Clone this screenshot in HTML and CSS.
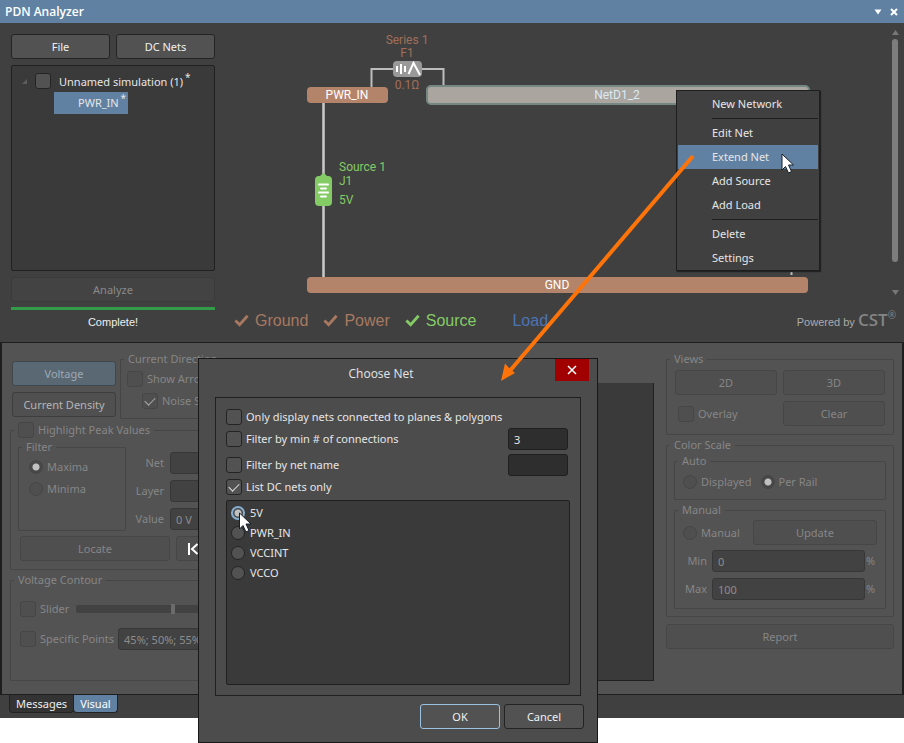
FILE: index.html
```html
<!DOCTYPE html>
<html lang="en">
<head>
<meta charset="utf-8">
<title>PDN Analyzer</title>
<link rel="stylesheet" href="styles.css">
</head>
<body>
<div class="app">
  <header class="titlebar">
    <h1>PDN Analyzer</h1>
    <button class="title-btn" aria-label="Panel menu"><svg width="8" height="6" viewBox="0 0 8 6"><path d="M0.5 0.5h7L4 5.5z" fill="#fff"/></svg></button>
    <button class="title-btn" aria-label="Close panel"><svg width="8" height="8" viewBox="0 0 8 8"><path d="M1 1l6 6M7 1L1 7" stroke="#fff" stroke-width="2"/></svg></button>
  </header>

  <section class="upper">
    <div class="sim">
      <div class="pair">
        <button class="btn">File</button>
        <button class="btn">DC Nets</button>
      </div>
      <div class="tree">
        <div class="tree-root">
          <svg width="6" height="6" viewBox="0 0 6 6"><path d="M5 0v5H0z" fill="#5c5c5c"/></svg>
          <label class="check"><input type="checkbox"><span>Unnamed simulation (1) <sup>*</sup></span></label>
        </div>
        <div class="tree-leaf">PWR_IN <sup>*</sup></div>
      </div>
      <button class="btn ghost analyze" disabled>Analyze</button>
      <div class="progress"></div>
      <p class="status">Complete!</p>
    </div>

    <div class="network">
      <div class="canvas-row">
        <svg class="diagram" viewBox="215 23 674 277" preserveAspectRatio="xMinYMin meet">
          <g fill="none" stroke="#bdbdbd" stroke-width="2">
            <path d="M371.500 88V69H443.500V88"/>
            <path d="M323.500 102V278" stroke="#a9a9a9" stroke-width="3"/>
            <path d="M323.500 102V278" stroke="#c8c8c8" stroke-width="1"/>
            <path d="M791.500 272V275"/>
          </g>
          <rect x="393" y="61" width="29" height="16" rx="4" fill="#999"/>
          <path d="M397 66v6M401 64v10M405 66v6" stroke="#fff" stroke-width="2" fill="none"/>
          <path d="M408.500 74L413.500 63L420 75" stroke="#fff" stroke-width="2" fill="none"/>
          <rect x="307" y="87" width="81" height="16" rx="4" fill="#b4846a"/>
          <rect x="427" y="86" width="382" height="18" rx="4" fill="#aaa59f" stroke="#758783" stroke-width="2"/>
          <rect x="307" y="277" width="501" height="16" rx="4" fill="#b4846a"/>
          <path d="M320 176l3.500-3.500 3.500 3.500h1q4 0 4 4v22q0 4-4 4h-9q-4 0-4-4v-22q0-4 4-4z" fill="#84cb66"/>
          <path d="M319 184.500h9M321 188.500h5M319 192.500h9M321 196.500h5" stroke="#fff" stroke-width="2" stroke-linecap="round"/>
          <g class="node-text" text-anchor="middle">
            <text class="copper" x="407" y="44">Series 1</text>
            <text class="copper" x="407" y="57">F1</text>
            <text class="copper" x="407" y="89">0.1Ω</text>
            <text x="347" y="99">PWR_IN</text>
            <text class="selected" x="617" y="99">NetD1_2</text>
            <text x="557" y="289">GND</text>
          </g>
          <g class="node-text green">
            <text x="339" y="171">Source 1</text>
            <text x="339" y="185">J1</text>
            <text x="339" y="204">5V</text>
          </g>
        </svg>
        <div class="scroll">
          <svg width="7" height="5" viewBox="0 0 7 5"><path d="M0 5L3.500 0L7 5z" fill="#777"/></svg>
          <i></i>
          <svg width="7" height="5" viewBox="0 0 7 5"><path d="M0 0L3.500 5L7 0z" fill="#777"/></svg>
        </div>
      </div>
      <div class="legend-row">
        <span class="key copper"><svg class="tick" viewBox="0 0 16 13"><path d="M1.500 6.500L6 11L14.500 1.500"/></svg>Ground</span>
        <span class="key copper"><svg class="tick" viewBox="0 0 16 13"><path d="M1.500 6.500L6 11L14.500 1.500"/></svg>Power</span>
        <span class="key green"><svg class="tick" viewBox="0 0 16 13"><path d="M1.500 6.500L6 11L14.500 1.500"/></svg>Source</span>
        <span class="key blue"><svg class="tick" viewBox="0 0 16 13"></svg>Load</span>
        <span class="powered">Powered by <b>CST<sup>®</sup></b></span>
      </div>
    </div>
  </section>

  <section class="lower">
    <div class="results">
      <div class="mode-row">
        <div class="modes">
          <button class="btn active" disabled>Voltage</button>
          <button class="btn flat">Current Density</button>
        </div>
        <fieldset class="direction">
          <legend>Current Direction</legend>
          <label class="check"><input type="checkbox" disabled>Show Arrows</label>
          <label class="check indent"><input type="checkbox" checked disabled>Noise Suppression</label>
        </fieldset>
      </div>

      <fieldset class="peaks">
        <legend><label class="check"><input type="checkbox" disabled>Highlight Peak Values</label></legend>
        <div class="peak-row">
          <fieldset class="filter">
            <legend>Filter</legend>
            <label class="check"><input type="radio" name="peak" checked disabled>Maxima</label>
            <label class="check"><input type="radio" name="peak" disabled>Minima</label>
          </fieldset>
          <div class="fields">
            <label for="net">Net</label><input id="net" type="text" disabled>
            <label for="layer">Layer</label><input id="layer" type="text" disabled>
            <label for="value">Value</label><input id="value" type="text" value="0 V" disabled>
          </div>
        </div>
        <div class="locate-row">
          <button class="btn ghost locate" disabled>Locate</button>
          <button class="btn ghost first" aria-label="First"><svg width="12" height="12" viewBox="0 0 12 12"><path d="M2 0v12M10.500 1L5 6l5.500 5" fill="none" stroke="#fff" stroke-width="2"/></svg></button>
        </div>
      </fieldset>

      <fieldset class="contour">
        <legend>Voltage Contour</legend>
        <div class="contour-row"><label class="check"><input type="checkbox" disabled>Slider</label><input class="range" type="range" value="43" aria-label="Contour level" disabled></div>
        <div class="contour-row"><label class="check"><input type="checkbox" disabled>Specific Points</label><input class="points" type="text" aria-label="Points" value="45%; 50%; 55%" disabled></div>
      </fieldset>
    </div>

    <div class="plot"></div>

    <aside class="options">
      <fieldset class="views">
        <legend>Views</legend>
        <button class="btn ghost" disabled>2D</button>
        <button class="btn ghost" disabled>3D</button>
        <label class="check"><input type="checkbox" disabled>Overlay</label>
        <button class="btn ghost" disabled>Clear</button>
      </fieldset>
      <fieldset class="scale">
        <legend>Color Scale</legend>
        <fieldset class="auto">
          <legend>Auto</legend>
          <label class="check"><input type="radio" name="scale" disabled>Displayed</label>
          <label class="check"><input type="radio" name="scale" checked disabled>Per Rail</label>
        </fieldset>
        <fieldset class="manual">
          <legend>Manual</legend>
          <div class="manual-top">
            <label class="check"><input type="radio" name="scale" disabled>Manual</label>
            <button class="btn ghost" disabled>Update</button>
          </div>
          <div class="limit"><label for="min">Min</label><input id="min" type="text" value="0" disabled><span>%</span></div>
          <div class="limit"><label for="max">Max</label><input id="max" type="text" value="100" disabled><span>%</span></div>
        </fieldset>
      </fieldset>
      <button class="btn ghost report" disabled>Report</button>
    </aside>
  </section>

  <nav class="tabs">
    <button class="tab">Messages</button>
    <button class="tab current">Visual</button>
  </nav>

  <div class="menu" role="menu">
    <button role="menuitem">New Network</button>
    <hr>
    <button role="menuitem">Edit Net</button>
    <button role="menuitem" class="hover">Extend Net</button>
    <button role="menuitem">Add Source</button>
    <button role="menuitem">Add Load</button>
    <hr>
    <button role="menuitem">Delete</button>
    <button role="menuitem">Settings</button>
  </div>

  <div class="dialog" role="dialog" aria-labelledby="dialog-title">
    <div class="dialog-head">
      <h2 id="dialog-title">Choose Net</h2>
      <button class="close" aria-label="Close"><svg width="10" height="10" viewBox="0 0 10 10"><path d="M1 1l8 8M9 1L1 9" stroke="#fff" stroke-width="1.500"/></svg></button>
    </div>
    <div class="group">
      <label class="check"><input type="checkbox">Only display nets connected to planes &amp; polygons</label>
      <div class="filter-row"><label class="check"><input type="checkbox">Filter by min # of connections</label><input type="text" aria-label="Minimum connections" value="3"></div>
      <div class="filter-row"><label class="check"><input type="checkbox">Filter by net name</label><input type="text" aria-label="Net name"></div>
      <label class="check"><input type="checkbox" checked>List DC nets only</label>
      <div class="nets">
        <label class="check"><input class="focus" type="radio" name="dcnet" checked>5V</label>
        <label class="check"><input type="radio" name="dcnet">PWR_IN</label>
        <label class="check"><input type="radio" name="dcnet">VCCINT</label>
        <label class="check"><input type="radio" name="dcnet">VCCO</label>
      </div>
    </div>
    <div class="actions">
      <button class="btn default">OK</button>
      <button class="btn">Cancel</button>
    </div>
  </div>

  <svg class="overlay" width="820" height="560" viewBox="0 0 820 560">
    <path d="M693 156L508 373" stroke="#ff7409" stroke-width="4"/>
    <path d="M501 381L505 363.500L509 368L515 373z" fill="#ff7409"/>
    <path d="M782 154v16l3.500-3.500 3 6.500 3-1.500-3-6.500h5z" fill="#fff" stroke="#15202b"/>
    <path d="M239.500 513v16l3.500-3.500 3 6.500 3-1.500-3-6.500h5z" fill="#fff" stroke="#15202b"/>
  </svg>
</div>
</body>
</html>
```
FILE: styles.css
```css
* { box-sizing: border-box; }

body {
  min-height: 100vh;
  margin: 0;
  padding-bottom: 24px;
  background: #fff;
  font: 11px/16px "Noto Sans", "Open Sans", sans-serif;
  color: #e6e6e6;
}

button, input { font: inherit; color: inherit; margin: 0; }
svg { display: block; flex: none; }
h1, h2, p { margin: 0; }

.app { position: relative; background: #404040; }

.titlebar {
  display: flex;
  align-items: center;
  gap: 8px;
  height: 23px;
  padding: 0 6px 0 5px;
  background: #6081a2;
}
.titlebar h1 { flex: 1; font: 600 12px/16px "Open Sans", sans-serif; color: #fff; }
.title-btn { padding: 0; border: 0; background: none; }

/* Buttons */
.btn {
  height: 25px;
  padding: 0 8px;
  border: 1px solid #242424;
  border-radius: 3px;
  background: #525252;
  color: #f0f0f0;
}
.btn.ghost { background: #4f4f4f; border-color: #464646; color: #868686; }
.btn.flat { background: #505050; border-color: #3d3d3d; color: #b4b4b4; }
.btn.active { background: #5a6873; border-color: #3f464c; color: #9caab5; }

/* Check boxes and radios */
.check { display: flex; align-items: center; gap: 4px; white-space: nowrap; }
.check input {
  appearance: none;
  flex: none;
  width: 16px;
  height: 16px;
  border: 1px solid #242424;
  border-radius: 3px;
  background: #525252;
}
.check input[type="radio"] { width: 14px; height: 14px; border-radius: 50%; }
.check input[type="checkbox"]:checked { display: grid; place-items: center; }
.check input[type="checkbox"]:checked::after {
  content: "";
  width: 9px;
  height: 5px;
  margin-bottom: 3px;
  border: solid #ddd;
  border-width: 0 0 1px 1px;
  transform: rotate(-45deg);
}
.check input[type="checkbox"]:disabled::after { border-color: #aaa; }
.check input[type="radio"]:checked { background: radial-gradient(circle, #c0c0c0 3px, #484848 4px); }
.check input:disabled { border-color: #464646; background-color: #4f4f4f; }

input[type="text"] {
  height: 22px;
  min-width: 0;
  padding: 0 5px;
  border: 1px solid #1f1f1f;
  border-radius: 3px;
  background: #2e2e2e;
}
input[type="text"]:disabled { border-color: #373737; background: #424242; color: #8d8d8d; }

/* Simulation and network */
.upper { display: flex; height: 319px; }
.sim { width: 215px; padding: 11px 0 0 11px; display: flex; flex-direction: column; }
.pair { display: grid; grid-template-columns: 1fr 1fr; gap: 6px; }
.tree { height: 206px; margin: 6px 0; padding: 5px 0 0 10px; border: 1px solid #202020; border-radius: 2px; background: #3a3a3a; }
.tree sup { margin-left: -1px; line-height: 0; font-size: 10px; }
.tree-root { display: flex; align-items: center; gap: 7px; height: 21px; }
.tree-root .check { gap: 8px; }
.tree-root input { margin-bottom: 2px; }
.tree-leaf { width: 74px; height: 22px; margin-left: 32px; padding-left: 24px; line-height: 22px; white-space: nowrap; background: #6081a2; }
.btn.analyze { background: #434343; border-color: #3b3b3b; color: #8a8a8a; }
.progress { height: 3px; margin-top: 5px; background: #319b47; }
.status { padding-top: 4px; font: 11px/16px "Liberation Sans", sans-serif; text-align: center; color: #f0f0f0; }

.network { flex: 1; min-width: 0; }
.canvas-row { display: flex; }
.diagram { flex: 1; min-width: 0; }
.node-text { font: 12px Roboto, sans-serif; fill: #fff; }
.node-text .copper { fill: #a06f58; }
.node-text .selected { fill: #dceaf4; }
.node-text.green { fill: #84cb66; }
.scroll { width: 15px; padding: 7px 0 5px 3px; display: flex; flex-direction: column; gap: 4px; }
.scroll i { flex: 1; width: 6px; margin-bottom: 24px; border-radius: 3px; background: #7d7d7d; }

.legend-row { display: flex; align-items: center; gap: 15px; height: 41px; padding: 0 8px 0 19px; font: 16px/20px "Liberation Sans", sans-serif; }
.key { display: flex; align-items: center; gap: 6px; }
.tick { width: 15px; height: 13px; fill: none; stroke: currentColor; stroke-width: 3; }
.key.copper { color: #a87860; }
.key.green { color: #84cb66; }
.key.blue { color: #4c74b5; }
.powered { margin-left: auto; font-size: 11px; color: #aaa; }
.powered b { font: 600 17px/20px "Open Sans", sans-serif; color: #858585; }
.powered sup { font-size: 10px; font-weight: 400; line-height: 0; }

/* Results panel */
.lower { display: flex; padding: 8px 8px 13px; border: solid #1e1e1e; border-width: 1px 2px; background: #535353; color: #868686; }
fieldset { --pad: 8px; min-width: 0; margin: 0; padding: 0 var(--pad); border: 1px solid #464646; border-radius: 1px; }
legend { height: 16px; margin-left: calc(3px - var(--pad)); padding: 0 4px; }

.results { width: 300px; }
.mode-row { display: flex; gap: 4px; }
.modes { width: 106px; padding: 10px 0 0 2px; display: grid; gap: 6px; align-content: start; }
.modes .btn { padding: 0; }
.direction { --pad: 6px; flex: 1; padding-top: 3px; padding-bottom: 8px; }
.direction .check { height: 18px; }
.direction .indent { margin: 4px 0 0 15px; }
.peaks { --pad: 7px; margin-top: 3px; padding-top: 1px; padding-bottom: 8px; }
.peak-row { display: flex; gap: 8px; }
.filter { --pad: 10px; width: 108px; padding-top: 1px; padding-bottom: 30px; }
.filter .check { height: 22px; }
.fields { flex: 1; display: grid; grid-template-columns: 30px 1fr; gap: 6px; padding-top: 13px; align-content: start; align-items: center; text-align: right; }
.locate-row { display: flex; gap: 6px; margin: 5px 0 0 2px; }
.locate { width: 150px; }
.first { flex: 1; padding-left: 10px; }
.contour { --pad: 9px; margin-top: 2px; padding-top: 10px; padding-bottom: 30px; display: grid; gap: 8px; }
.contour-row { display: flex; align-items: center; gap: 4px; height: 22px; }
.contour-row .points { flex: 1; }
.range { appearance: none; flex: 1; height: 8px; margin-left: 3px; border-radius: 2px; background: #424242; }
.range::-webkit-slider-thumb { appearance: none; width: 4px; height: 10px; background: #6b6b6b; }

.plot { flex: 1; margin: 32px 12px 0 12px; border: solid #202020; border-width: 0 1px 1px; background: #3a3a3a; }

.options { width: 228px; margin-bottom: 32px; }
.views { display: grid; grid-template-columns: 1fr 1fr; gap: 6px; padding-top: 3px; padding-bottom: 8px; }
.views .check { padding-left: 3px; }
.scale { --pad: 7px; margin-top: 2px; padding-bottom: 7px; }
.auto { display: flex; gap: 9px; padding-top: 2px; padding-bottom: 6px; }
.auto .check { height: 22px; }
.manual { margin-top: 2px; padding-top: 2px; padding-bottom: 8px; }
.manual-top { display: flex; justify-content: space-between; margin-bottom: 5px; }
.manual-top .btn { width: 124px; }
.limit { display: flex; align-items: center; margin-right: -6px; }
.limit + .limit { margin-top: 6px; }
.limit label { width: 24px; margin-right: 5px; text-align: right; }
.limit input { flex: 1; }
.limit span { width: 18px; padding-left: 1px; }
.report { width: 100%; margin-top: 7px; }

/* Tabs */
.tabs { display: flex; height: 23px; padding: 0 9px 5px; }
.tab { padding: 0 6px; border: 1px solid #222; border-top: 0; border-radius: 0 0 4px 4px; background: #333; color: #eee; }
.tab.current { margin-left: -1px; background: #6081a2; color: #fff; }

/* Context menu */
.menu { position: absolute; left: 676px; top: 90px; width: 144px; padding: 1px 1px 0; border: 1px solid #1e1e1e; background: #404040; box-shadow: 1px 1px 1px #222; }
.menu button { display: block; width: 100%; height: 24px; padding: 0 0 0 34px; border: 0; background: none; text-align: left; }
.menu .hover { background: #6081a2; }
.menu hr { margin: 2px 0 2px 34px; border: 0; border-top: 1px solid #1e1e1e; }

/* Choose Net dialog */
.dialog { position: absolute; left: 198px; top: 358px; width: 400px; padding: 0 13px 13px 16px; border: 1px solid #181818; background: #4c4c4c; }
.dialog-head { display: flex; height: 38px; margin-right: -5px; }
.dialog h2 { flex: 1; padding-right: 8px; font: 12px/30px "Open Sans", sans-serif; text-align: center; }
.close { display: grid; place-items: center; width: 34px; height: 22px; padding: 0; border: 0; background: #a00000; }
.group { display: flex; flex-direction: column; margin-right: 3px; padding: 8px 10px 10px; border: 1px solid #202020; }
.group .check { height: 22px; }
.filter-row { display: flex; justify-content: space-between; height: 22px; margin-right: 2px; }
.filter-row + .filter-row { margin-top: 4px; }
.filter-row input[type="text"] { width: 60px; }
.nets { height: 185px; margin-top: 2px; padding: 2px 4px; border: 1px solid #202020; border-radius: 2px; background: #3a3a3a; }
.group .nets .check { height: 20px; gap: 5px; }
.nets .focus { border: 2px solid #86aed0; }
.nets .focus:checked { background: radial-gradient(circle, #fff 3px, #484848 4px); }
.actions { display: flex; justify-content: flex-end; gap: 4px; margin-top: 8px; }
.actions .btn { width: 80px; }
.btn.default { border-color: #9cc2df; }

.overlay { position: absolute; left: 0; top: 0; pointer-events: none; }
```
